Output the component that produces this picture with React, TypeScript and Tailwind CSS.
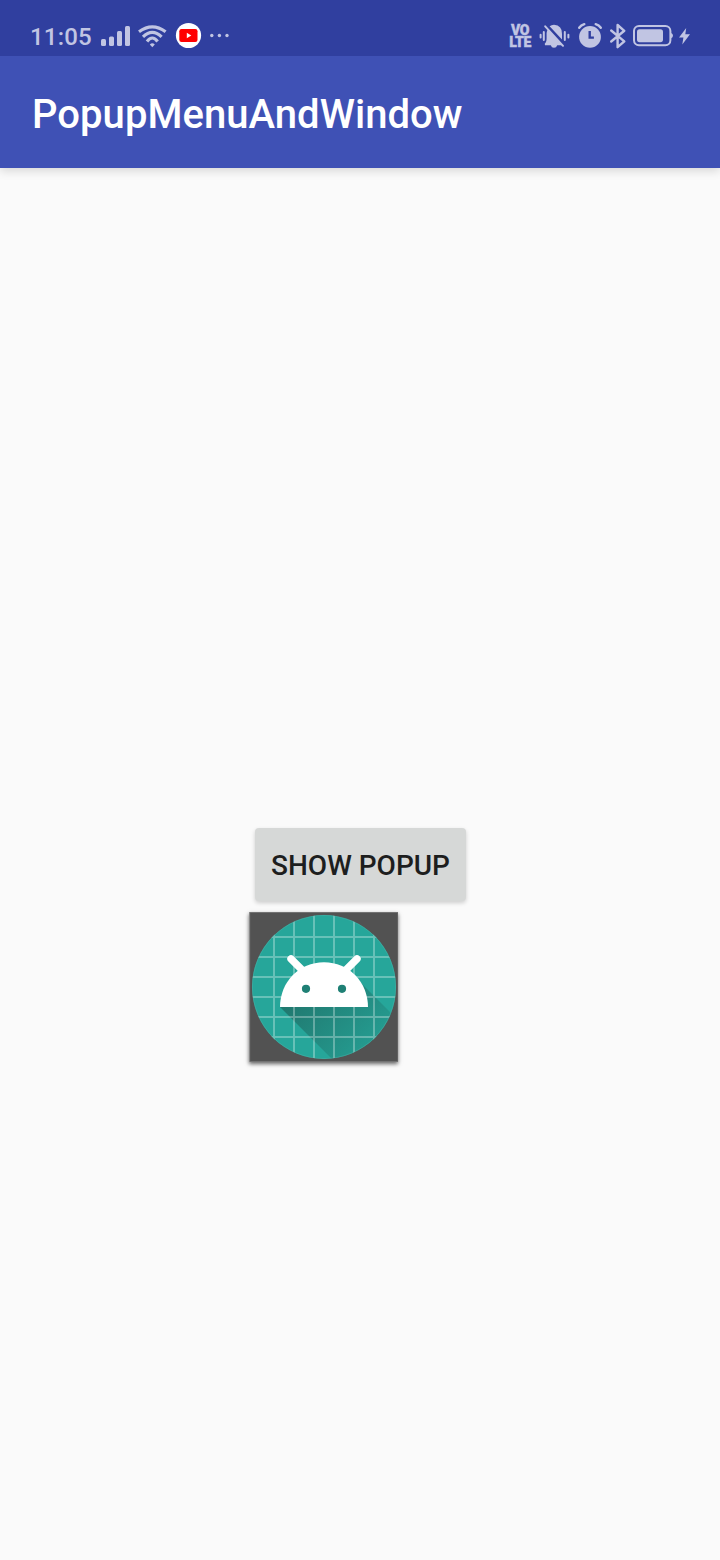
import type { ReactNode } from "react";

const TINT = "#c1c5e3";

function Glyph({ x, w, className, children }: { x: number; w: number; className: string; children: ReactNode }) {
  return (
    <svg className={"h-14 shrink-0 " + className} width={w} height={56} viewBox={`${x} 0 ${w} 56`} fill={TINT} aria-hidden="true">
      {children}
    </svg>
  );
}

function StatusBar() {
  return (
    <div className="z-10 flex h-14 shrink-0 items-center justify-between bg-[#303f9f]">
      <div className="flex h-14 items-center pl-[30px]">
        <span className="w-[71px] pt-[19px] text-[24px] leading-[39px] font-medium tracking-[0.2px] text-[#c1c5e3]">11:05</span>
        <Glyph x={101} w={29} className="">
          <rect x="101" y="39" width="5" height="7" rx="1.5" />
          <rect x="109" y="36.5" width="5" height="9.5" rx="1.5" />
          <rect x="117" y="31" width="5" height="15" rx="1.5" />
          <rect x="125" y="26" width="5" height="20" rx="1.5" />
        </Glyph>
        <Glyph x={137} w={30} className="ml-[7px]">
          <g fill="none" stroke={TINT} strokeWidth="3.2">
            <path d="M139 31.7Q152.3 22 165.6 31.7" />
            <path d="M143 36.8Q152.3 28 161.6 36.8" />
            <path d="M147 41.4Q152.3 34.6 157.6 41.4" />
          </g>
          <path d="M149.8 44.5Q152.3 41.8 154.8 44.5L152.3 47.2Z" />
        </Glyph>
        <Glyph x={175} w={27} className="ml-2">
          <circle cx="188.5" cy="35.5" r="12.6" fill="#fff" />
          <rect x="179.3" y="29" width="18.2" height="13" rx="2.2" fill="#f00" />
          <path d="M186.8 32.8v5.4l4.5-2.7Z" fill="#fff" />
        </Glyph>
        <Glyph x={209} w={21} className="ml-[7px]">
          <circle cx="211.8" cy="35.5" r="1.7" />
          <circle cx="219.4" cy="35.5" r="1.7" />
          <circle cx="227" cy="35.5" r="1.7" />
        </Glyph>
      </div>
      <div className="flex h-14 items-center pr-7">
        <div className="w-[24px] pt-[16px] text-center text-[14px] leading-[12px] font-black tracking-[-0.4px] text-[#c1c5e3] [-webkit-text-stroke:0.4px_#c1c5e3]">
          VO
          <br />
          LTE
        </div>
        <Glyph x={539} w={31} className="ml-[7px]">
          <path d="M545 45.3Q544 44 546 42Q546.6 40.5 546.6 38.5V33Q546.8 31 547.8 29.5L562 45.3H557.2Q556.5 47.8 554 47.8T550.8 45.3Z" />
          <path d="M549.6 26.3Q551.4 24.8 554 24.8Q562.3 25.5 562 34V39.4Z" />
          <path d="M545.2 26.3L563 45.8M543.8 32v8M540.6 34.8v2.6M564.8 32v8M568.4 34.8v2.6" fill="none" stroke={TINT} strokeWidth="2" strokeLinecap="round" />
        </Glyph>
        <Glyph x={577} w={26} className="ml-[7px]">
          <circle cx="590" cy="36.9" r="10.9" />
          <path d="M579.2 27.8Q581 25.2 584.3 24.2M595.7 24.2Q599 25.2 600.8 27.8" fill="none" stroke={TINT} strokeWidth="2.4" strokeLinecap="round" />
          <path d="M589.7 31v6.6h4.2" fill="none" stroke="#303f9f" strokeWidth="2.4" />
        </Glyph>
        <Glyph x={609} w={18} className="ml-[6px]">
          <path d="M611.2 30.5L624.3 41.4L617.6 47.2V25L624.3 30.8L611.2 41.5" fill="none" stroke={TINT} strokeWidth="2.4" strokeLinejoin="round" strokeLinecap="round" />
        </Glyph>
        <Glyph x={632} w={42} className="ml-[5px]">
          <rect x="634" y="26" width="36.4" height="19.2" rx="5" fill="none" stroke={TINT} strokeWidth="2" />
          <rect x="637" y="29.2" width="26" height="13" rx="2.6" />
          <path d="M671 33Q673 33.5 673 35.6T671 38.2Z" />
        </Glyph>
        <Glyph x={678} w={14} className="ml-1">
          <path d="M686.2 28L679 37.4h4.4L682.3 44.4L690 34.3h-4.7Z" />
        </Glyph>
      </div>
    </div>
  );
}

function AndroidIcon() {
  return (
    <svg width="149" height="150" viewBox="249 912 149 150" aria-label="Android">
      <defs>
        <clipPath id="disc"><circle cx="324" cy="987" r="72" /></clipPath>
        <linearGradient id="shade" gradientUnits="userSpaceOnUse" x1="301" y1="985" x2="362" y2="1046">
          <stop offset="0" stopColor="#20776e" />
          <stop offset="1" stopColor="#20776e" stopOpacity="0.28" />
        </linearGradient>
      </defs>
      <rect x="249.75" y="912.5" width="148.25" height="149" fill="#525252" stroke="#727272" />
      <g clipPath="url(#disc)">
        <rect x="252" y="915" width="144" height="144" fill="#26a69a" />
        <path d="M280 1007L340 1067H420V1042L361 983Z" fill="url(#shade)" />
        <path
          d="M274 915v144M294 915v144M314 915v144M334 915v144M354 915v144M374 915v144M252 937h144M252 957h144M252 977h144M252 997h144M252 1017h144M252 1037h144"
          stroke="#fff" strokeOpacity="0.3" strokeWidth="2"
        />
      </g>
      <circle cx="324" cy="987" r="71.6" fill="none" stroke="#5dbdb4" strokeOpacity="0.4" strokeWidth="0.8" />
      <path d="M291 958.8L304 971.8M357 958.8L344 971.8" stroke="#fff" strokeWidth="7.4" strokeLinecap="round" />
      <path d="M280 1007C280 982 299 962.2 324 962.2S368 982 368 1007Z" fill="#fff" />
      <circle cx="306" cy="988.8" r="4.1" fill="#1f8075" />
      <circle cx="342" cy="988.8" r="4.1" fill="#1f8075" />
    </svg>
  );
}

export default function App() {
  return (
    <div className="flex h-[1560px] w-[720px] flex-col overflow-hidden bg-[#fafafa] font-[Roboto,sans-serif]">
      <StatusBar />
      <header className="flex h-28 shrink-0 items-center bg-[#3f51b5] px-8 pt-[5px] shadow-[0_3px_9px_rgba(0,0,0,0.14)]">
        <h1 className="text-[40px] leading-[42px] font-medium tracking-[0.05px] text-white">PopupMenuAndWindow</h1>
      </header>
      <main className="flex flex-1 flex-col items-start pt-[660px]">
        <button className="ml-[255px] flex h-[73px] w-[211px] items-center justify-center rounded-[4px] bg-[#d6d8d7] pt-[2px] text-[28px] font-medium text-[#1d1e1e] shadow-[0_2px_4px_rgba(0,0,0,0.18)]">
          SHOW POPUP
        </button>
        <div className="mt-[11px] ml-[249px] h-[150px] w-[149px] shadow-[0_2px_4px_rgba(0,0,0,0.6)]">
          <AndroidIcon />
        </div>
      </main>
    </div>
  );
}
